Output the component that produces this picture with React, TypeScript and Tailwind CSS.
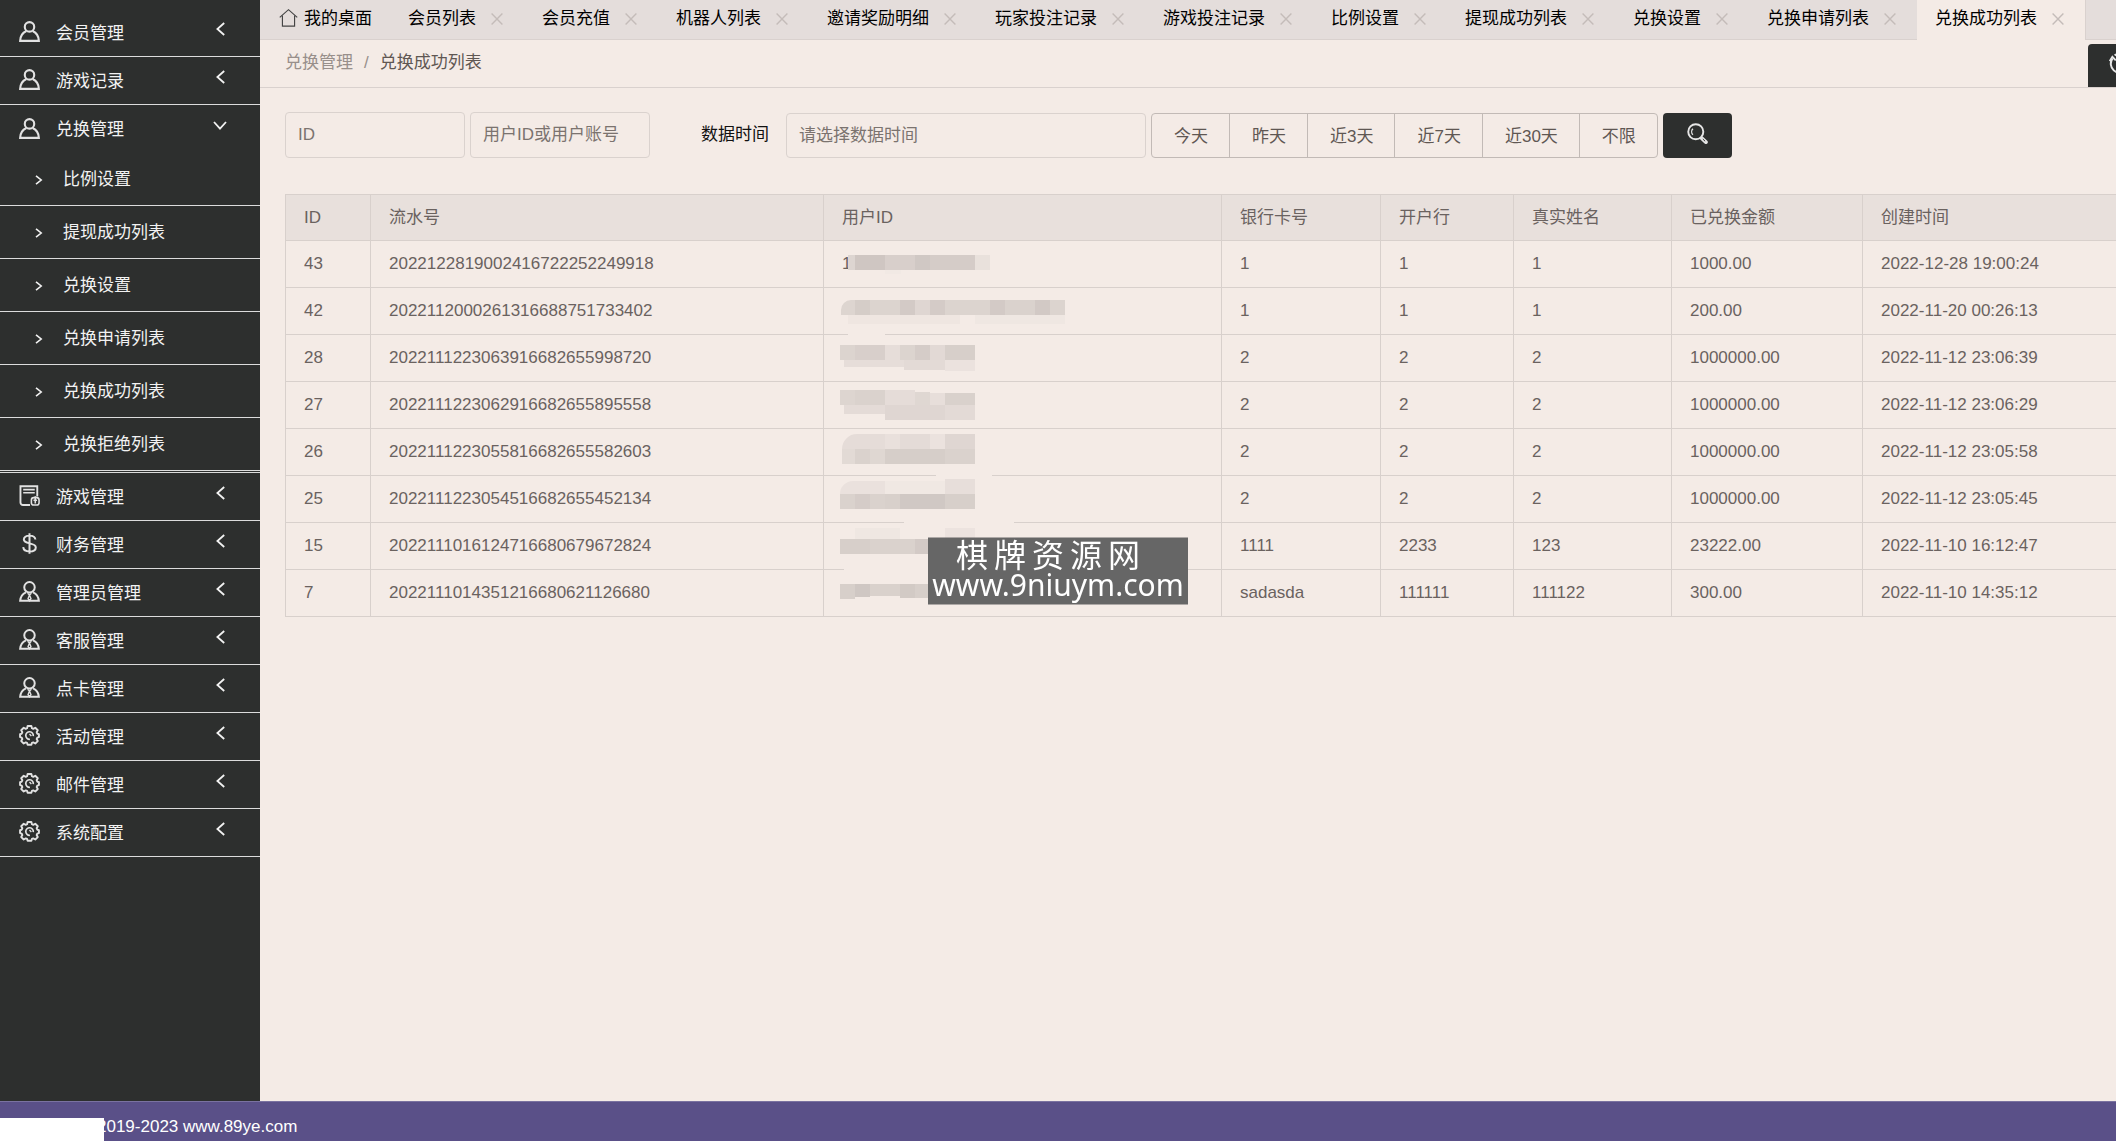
import type { ReactNode } from 'react';

type IconProps = { className?: string };

const tabs = [
  '会员列表',
  '会员充值',
  '机器人列表',
  '邀请奖励明细',
  '玩家投注记录',
  '游戏投注记录',
  '比例设置',
  '提现成功列表',
  '兑换设置',
  '兑换申请列表',
  '兑换成功列表',
];

const subMenu = ['比例设置', '提现成功列表', '兑换设置', '兑换申请列表', '兑换成功列表', '兑换拒绝列表'];

const ranges = ['今天', '昨天', '近3天', '近7天', '近30天', '不限'];

const columns = ['ID', '流水号', '用户ID', '银行卡号', '开户行', '真实姓名', '已兑换金额', '创建时间'];

const rows = [
  { id: '43', sn: '2022122819002416722252249918', card: '1', bank: '1', name: '1', money: '1000.00', time: '2022-12-28 19:00:24' },
  { id: '42', sn: '2022112000261316688751733402', card: '1', bank: '1', name: '1', money: '200.00', time: '2022-11-20 00:26:13' },
  { id: '28', sn: '2022111223063916682655998720', card: '2', bank: '2', name: '2', money: '1000000.00', time: '2022-11-12 23:06:39' },
  { id: '27', sn: '2022111223062916682655895558', card: '2', bank: '2', name: '2', money: '1000000.00', time: '2022-11-12 23:06:29' },
  { id: '26', sn: '2022111223055816682655582603', card: '2', bank: '2', name: '2', money: '1000000.00', time: '2022-11-12 23:05:58' },
  { id: '25', sn: '2022111223054516682655452134', card: '2', bank: '2', name: '2', money: '1000000.00', time: '2022-11-12 23:05:45' },
  { id: '15', sn: '2022111016124716680679672824', card: '1111', bank: '2233', name: '123', money: '23222.00', time: '2022-11-10 16:12:47' },
  { id: '7', sn: '2022111014351216680621126680', card: 'sadasda', bank: '111111', name: '111122', money: '300.00', time: '2022-11-10 14:35:12' },
];

// mosaic over the user id: x, y, width, height, fill
type Block = [number, number, number, number, string];

const mosaics: { round: number; left: number; top: number; blocks: Block[] }[] = [
  {
    round: 0,
    left: 22,
    top: 0,
    blocks: [
      [24, 14, 7, 15, '#ddd5d1'],
      [31, 14, 30, 15, '#cfc6c2'],
      [61, 14, 30, 15, '#d8cfcb'],
      [91, 14, 15, 15, '#d0c8c4'],
      [106, 14, 45, 15, '#d5ccc8'],
      [151, 14, 15, 15, '#e9e1dc'],
      [61, 29, 16, 4, '#f1e9e4'],
    ],
  },
  {
    round: 10,
    left: 17,
    top: 12,
    blocks: [
      [17, 12, 14, 15, '#ddd5d0'],
      [31, 12, 15, 15, '#d5cdc8'],
      [46, 12, 30, 15, '#dcd4cf'],
      [76, 12, 15, 15, '#d3cac6'],
      [91, 12, 15, 15, '#dfd6d2'],
      [106, 12, 15, 15, '#d4cbc7'],
      [121, 12, 45, 15, '#dcd4cf'],
      [166, 12, 15, 15, '#d3cac6'],
      [181, 12, 30, 15, '#dad2cd'],
      [211, 12, 15, 15, '#d2c9c5'],
      [226, 12, 15, 15, '#dcd4cf'],
      [24, 27, 112, 9, '#efe6e1'],
      [151, 27, 90, 9, '#efe7e2'],
      [24, 46, 37, 1, '#f4ebe6'],
    ],
  },
  {
    round: 0,
    left: 16,
    top: 0,
    blocks: [
      [16, 10, 15, 15, '#dcd4cf'],
      [31, 10, 30, 15, '#d8cfcb'],
      [61, 10, 15, 15, '#e6ddd9'],
      [76, 10, 15, 15, '#dcd4cf'],
      [91, 10, 15, 15, '#d5ccc8'],
      [106, 10, 15, 15, '#e2d9d5'],
      [121, 10, 30, 15, '#d7cfca'],
      [20, 25, 60, 7, '#e6ddd9'],
      [80, 25, 41, 10, '#e3dad6'],
      [121, 25, 30, 11, '#ebe2de'],
    ],
  },
  {
    round: 0,
    left: 16,
    top: 0,
    blocks: [
      [16, 8, 15, 15, '#ddd5d0'],
      [31, 8, 30, 15, '#dad2cd'],
      [61, 8, 30, 15, '#e5dcd8'],
      [91, 10, 15, 13, '#dfd7d2'],
      [106, 11, 15, 12, '#e7deda'],
      [121, 11, 30, 12, '#d9d1cc'],
      [20, 23, 41, 9, '#e4dbd7'],
      [61, 23, 60, 15, '#dfd6d2'],
      [121, 23, 30, 15, '#e3dad6'],
    ],
  },
  {
    round: 15,
    left: 18,
    top: 5,
    blocks: [
      [18, 5, 43, 15, '#e5dcd8'],
      [61, 5, 15, 15, '#e9e0dc'],
      [76, 5, 30, 15, '#e4dbd7'],
      [106, 5, 15, 15, '#ebe2de'],
      [121, 5, 30, 15, '#dfd6d2'],
      [18, 20, 13, 15, '#e2dad5'],
      [31, 20, 15, 15, '#dad2cd'],
      [46, 20, 15, 15, '#dfd7d2'],
      [61, 20, 60, 15, '#d6cec9'],
      [121, 20, 30, 15, '#dad2cd'],
      [112, 46, 56, 1, '#f4ebe6'],
    ],
  },
  {
    round: 13,
    left: 16,
    top: 5,
    blocks: [
      [16, 5, 45, 13, '#eae1dd'],
      [61, 5, 60, 13, '#f0e8e3'],
      [121, 3, 30, 15, '#e7deda'],
      [16, 18, 15, 15, '#dad2cd'],
      [31, 18, 15, 15, '#d5ccc8'],
      [46, 18, 15, 15, '#dad2cd'],
      [61, 18, 15, 15, '#d8d0cb'],
      [76, 18, 45, 15, '#d0c8c4'],
      [121, 18, 30, 15, '#d7cfca'],
      [80, 46, 110, 1, '#f4ebe6'],
    ],
  },
  {
    round: 0,
    left: 16,
    top: 0,
    blocks: [
      [31, 5, 45, 11, '#efe7e2'],
      [121, 5, 30, 11, '#ece3df'],
      [16, 16, 30, 15, '#d7cfca'],
      [46, 16, 45, 15, '#dad2cd'],
      [91, 16, 60, 15, '#d3cac6'],
      [20, 46, 100, 1, '#f4ebe6'],
    ],
  },
  {
    round: 0,
    left: 16,
    top: 0,
    blocks: [
      [16, 14, 15, 15, '#d7cfca'],
      [31, 14, 15, 13, '#cfc7c3'],
      [46, 14, 30, 12, '#d9d1cc'],
      [76, 14, 15, 14, '#d2cac5'],
      [91, 14, 60, 14, '#d7cfca'],
    ],
  },
];

function UserIcon({ className }: IconProps) {
  return (
    <svg viewBox="0 0 20 20" className={className} fill="none" stroke="currentColor" strokeWidth="2" aria-hidden="true">
      <circle cx="10" cy="5.6" r="4.5" />
      <path d="M7 9.600C3.400 11.200 1.300 14.400 1.100 18.900h17.800c-.2-4.500-2.300-7.700-5.900-9.300" />
    </svg>
  );
}

function StaffIcon({ className }: IconProps) {
  return (
    <svg viewBox="0 0 20 20" className={className} fill="none" stroke="currentColor" strokeWidth="1.900" aria-hidden="true">
      <circle cx="10" cy="6" r="5" />
      <path d="M6.600 10.800C3.300 12.200 1.400 15 1.100 18.900h17.800c-.3-3.900-2.200-6.700-5.500-8.100" />
      <path d="M8.200 11.600L10 13.400l1.800-1.800M10 13.400l-1.400 3.400 1.400 2 1.400-2z" strokeWidth="1.300" />
    </svg>
  );
}

function FormIcon({ className }: IconProps) {
  return (
    <svg viewBox="0 0 20 20" className={className} fill="none" stroke="currentColor" strokeWidth="1.800" aria-hidden="true">
      <path d="M10.500 19H3.800a2.400 2.400 0 0 1-2.400-2.400V1.200h16v9.800" />
      <path d="M4 4.400h11M4 7.400h11" strokeWidth="1.500" />
      <rect x="11.800" y="12" width="7.300" height="7" rx="2.200" strokeWidth="1.500" />
      <path d="M15.500 10.600v7M13.800 14.600h3.400" strokeWidth="1.500" />
    </svg>
  );
}

function DollarIcon({ className }: IconProps) {
  return (
    <svg viewBox="0 0 20 20" className={className} fill="none" stroke="currentColor" strokeWidth="1.900" aria-hidden="true">
      <path d="M10 .2v19.600M15.600 6.200c-.2-2.300-2.200-3.700-5.600-3.700S4.600 4 4.600 6.200c0 4.900 11.400 2.500 11.400 7.500 0 2.500-2.300 3.900-6 3.900s-5.700-1.600-6-4.100" />
    </svg>
  );
}

function GearIcon({ className }: IconProps) {
  return (
    <svg viewBox="0 0 20 20" className={className} fill="none" stroke="currentColor" strokeWidth="1.800" strokeLinejoin="round" aria-hidden="true">
      <path d="M8.200 1h3.600l.5 2.100 1.300.6 1.900-1.100 2.400 2.400-1.100 1.900.6 1.400 1.600.4v2.800l-1.600.5-.6 1.400 1.100 1.900-2.400 2.300-1.900-1-1.300.5-.5 1.700H8.200l-.5-1.700-1.300-.5-1.900 1-2.400-2.300 1.100-1.900-.6-1.400L1 11.500V8.700l1.600-.4.600-1.400L2.100 5l2.400-2.400 1.900 1.100 1.300-.6z" />
      <path d="M10.400 13.600A3.600 3.600 0 1 1 13.600 10.600" strokeWidth="1.600" />
      <path d="M10 8.600l1.800 1.800" strokeWidth="1.300" />
    </svg>
  );
}

function HomeIcon({ className }: IconProps) {
  return (
    <svg viewBox="0 0 20 20" className={className} fill="none" stroke="currentColor" strokeWidth="1.200" aria-hidden="true">
      <path d="M.8 9.400L10 1.200l9.200 8.200M3.600 7.600v10.900h12.800V7.600" />
    </svg>
  );
}

function SearchIcon({ className }: IconProps) {
  return (
    <svg viewBox="0 0 22 22" className={className} fill="none" stroke="currentColor" aria-hidden="true">
      <circle cx="9.200" cy="9.200" r="7.900" strokeWidth="2" />
      <path d="M6.200 12.400a4.600 4.600 0 0 1 0-6.400" strokeWidth="1.400" />
      <path d="M15.600 16l4.200 4" strokeWidth="4" strokeLinecap="round" />
      <path d="M16.600 16.800l2.400 2.300" strokeWidth="1" stroke="#2d2f2e" />
    </svg>
  );
}

function RefreshIcon({ className }: IconProps) {
  return (
    <svg viewBox="0 0 22 22" className={className} fill="none" stroke="currentColor" strokeWidth="2" aria-hidden="true">
      <path d="M3.400 6.600a9 9 0 0 0 13.200 12M18.600 15.400a9 9 0 0 0-13-12" />
      <path d="M.8 9.200l2.600-4.400 3.400 3.600M21.200 12.800l-2.600 4.400-3.400-3.600" />
    </svg>
  );
}

function ChevronLeft({ className }: IconProps) {
  return (
    <svg viewBox="0 0 9 14" className={className} fill="none" stroke="currentColor" strokeWidth="1.800" aria-hidden="true">
      <path d="M8.200 1L1.400 7l6.800 6" />
    </svg>
  );
}

function ChevronDown({ className }: IconProps) {
  return (
    <svg viewBox="0 0 14 9" className={className} fill="none" stroke="currentColor" strokeWidth="1.800" aria-hidden="true">
      <path d="M1 1l6 6.600L13 1" />
    </svg>
  );
}

function ChevronRight({ className }: IconProps) {
  return (
    <svg viewBox="0 0 8 10" className={className} fill="none" stroke="currentColor" strokeWidth="1.600" aria-hidden="true">
      <path d="M1 .8L6.200 5 1 9.200" />
    </svg>
  );
}

function CloseIcon({ className }: IconProps) {
  return (
    <svg viewBox="0 0 12 12" className={className} fill="none" stroke="currentColor" strokeWidth="1.400" aria-hidden="true">
      <path d="M.6.600l10.800 10.800M11.400.600L.6 11.400" />
    </svg>
  );
}

function MenuItem({ icon, label, open }: { icon: ReactNode; label: string; open?: boolean }) {
  return (
    <button
      type="button"
      aria-expanded={!!open}
      className={`flex h-12 w-full items-center pl-[19px] pr-[33px] pt-[2px] text-left ${open ? '' : 'border-b border-[#dcdcdc]'}`}
    >
      {icon}
      <span className="ml-4 flex-1">{label}</span>
      <span className="mb-[10px] flex w-[14px] justify-center">
        {open ? <ChevronDown className="h-[9px] w-[14px]" /> : <ChevronLeft className="h-[14px] w-[9px]" />}
      </span>
    </button>
  );
}

function Sidebar() {
  const icon = 'mb-1 h-[21px] w-[21px] shrink-0 text-[#e2e2e2]';
  return (
    <nav className="w-[260px] shrink-0 bg-[#2d2f2e] pt-[9px] text-[#f2f2f2]">
      <MenuItem icon={<UserIcon className={icon} />} label="会员管理" />
      <MenuItem icon={<UserIcon className={icon} />} label="游戏记录" />
      <MenuItem icon={<UserIcon className={icon} />} label="兑换管理" open />
      <ul className="border-b border-[#dcdcdc] pb-px">
        {subMenu.map((label) => (
          <li key={label}>
            <a href="#" className="flex h-[53px] items-center border-b border-[#dcdcdc] pl-[35px] pt-[2px]">
              <ChevronRight className="h-[10px] w-2" />
              <span className="ml-5">{label}</span>
            </a>
          </li>
        ))}
      </ul>
      <MenuItem icon={<FormIcon className={icon} />} label="游戏管理" />
      <MenuItem icon={<DollarIcon className={icon} />} label="财务管理" />
      <MenuItem icon={<StaffIcon className={icon} />} label="管理员管理" />
      <MenuItem icon={<StaffIcon className={icon} />} label="客服管理" />
      <MenuItem icon={<StaffIcon className={icon} />} label="点卡管理" />
      <MenuItem icon={<GearIcon className={icon} />} label="活动管理" />
      <MenuItem icon={<GearIcon className={icon} />} label="邮件管理" />
      <MenuItem icon={<GearIcon className={icon} />} label="系统配置" />
    </nav>
  );
}

function TabBar() {
  return (
    <div className="flex h-10 bg-[#e4dddb] text-black">
      <a href="#" className="flex shrink-0 items-center border-b border-[#d9d1ce] pb-[2px] pl-[19px] pr-[18px]">
        <HomeIcon className="mb-[2px] mr-[6px] h-5 w-[19px] text-[#444]" />
        我的桌面
      </a>
      {tabs.map((tab, i) => (
        <div
          key={tab}
          className={`flex shrink-0 items-center border-b pb-[2px] pl-[18px] pr-[21px] ${
            i === tabs.length - 1 ? 'border-[#f4ebe6] bg-[#f4ebe6]' : 'border-[#d9d1ce]'
          }`}
        >
          <a href="#">{tab}</a>
          <button type="button" aria-label={`关闭${tab}`} className="ml-[15px] text-[#c4bcb9]">
            <CloseIcon className="h-3 w-3" />
          </button>
        </div>
      ))}
      <div className="flex-1 border-b border-l border-[#d9d1ce]" />
    </div>
  );
}

function Filters() {
  const field = 'rounded-sm border border-[#dad2ce] bg-transparent px-3 placeholder:text-[#7b736f] outline-none';
  return (
    <form className="flex items-end pl-[25px] pt-6">
      <input aria-label="ID" placeholder="ID" className={`${field} mr-[5px] h-[46px] w-[180px]`} />
      <input aria-label="用户ID或用户账号" placeholder="用户ID或用户账号" className={`${field} h-[46px] w-[180px]`} />
      <label htmlFor="range" className="ml-[51px] mr-[17px] flex h-[46px] items-center text-[#111]">
        数据时间
      </label>
      <input id="range" placeholder="请选择数据时间" className={`${field} mr-[5px] h-[45px] w-[360px]`} />
      <div className="mr-[5px] flex h-[45px] divide-x divide-[#c2bab6] rounded-sm border border-[#c2bab6]">
        {ranges.map((r) => (
          <button key={r} type="button" className="pl-[22px] pr-[21px] pt-[2px] text-[#5f5753]">
            {r}
          </button>
        ))}
      </div>
      <button type="submit" aria-label="搜索" className="flex h-[45px] w-[69px] items-center justify-center rounded-sm bg-[#2d2f2e] pb-1 text-[#e6e6e6]">
        <SearchIcon className="h-[21px] w-[21px]" />
      </button>
    </form>
  );
}

function UserCell({ row }: { row: number }) {
  const { round, left, top, blocks } = mosaics[row];
  return (
    <div className="relative flex h-[46px] items-center px-[18px]">
      {row === 0 && '1'}
      <svg className="absolute left-0 top-0 h-[47px] w-[300px]" viewBox="0 0 300 47" aria-hidden="true">
        {blocks.map(([x, y, w, h, fill]) => (
          <rect key={`${x}-${y}`} x={x} y={y} width={w} height={h} fill={fill} />
        ))}
        {round > 0 && (
          <path d={`M${left - 1} ${top - 1}h${round + 1}v1a${round} ${round} 0 0 0-${round} ${round}h-1z`} fill="#f4ebe6" />
        )}
      </svg>
    </div>
  );
}

function DataTable() {
  const cell = 'border border-[#d8d0cc] px-[18px]';
  return (
    <div className="ml-[25px] mt-9 overflow-hidden">
      <table className="w-full table-fixed border-collapse text-[#6a625f]">
        <colgroup>
          <col className="w-[85px]" />
          <col className="w-[453px]" />
          <col className="w-[398px]" />
          <col className="w-[159px]" />
          <col className="w-[133px]" />
          <col className="w-[158px]" />
          <col className="w-[191px]" />
          <col />
        </colgroup>
        <thead>
          <tr className="h-[46px] bg-[#e8e0dc] text-left">
            {columns.map((c) => (
              <th key={c} className={`${cell} font-normal last:border-r-0`}>
                {c}
              </th>
            ))}
          </tr>
        </thead>
        <tbody>
          {rows.map((row, i) => (
            <tr key={row.id} className="h-[47px]">
              <td className={cell}>{row.id}</td>
              <td className={cell}>{row.sn}</td>
              <td className="border border-[#d8d0cc] p-0">
                <UserCell row={i} />
              </td>
              <td className={cell}>{row.card}</td>
              <td className={cell}>{row.bank}</td>
              <td className={cell}>{row.name}</td>
              <td className={cell}>{row.money}</td>
              <td className={`${cell} border-r-0`}>{row.time}</td>
            </tr>
          ))}
        </tbody>
      </table>
    </div>
  );
}

export default function App() {
  return (
    <div className="flex min-h-screen flex-col overflow-hidden bg-[#f4ebe6] font-['Liberation_Sans','Noto_Sans_CJK_SC',sans-serif] text-[17px] leading-6">
      <div className="flex flex-1">
        <Sidebar />
        <main className="min-w-0 flex-1 overflow-hidden">
          <TabBar />
          <div className="flex h-12 items-end justify-between border-b border-[#d9d1ce] pl-[25px]">
            <div className="flex h-full items-center pb-px">
              <a href="#" className="text-[#988f8b]">兑换管理</a>
              <span className="mx-[11px] text-[#988f8b]">/</span>
              <span className="text-[#5f5753]">兑换成功列表</span>
            </div>
            <button type="button" aria-label="刷新" className="-mr-[41px] flex h-[43px] w-[69px] items-center rounded-tl-sm bg-[#2d2f2e] pb-[6px] pl-[21px] text-[#e6e6e6]">
              <RefreshIcon className="h-[22px] w-[22px]" />
            </button>
          </div>
          <Filters />
          <DataTable />
        </main>
      </div>

      <footer className="flex h-10 items-end border-t border-[#7a72a0] bg-[#5a5088] text-white">
        <div className="z-10 h-[23px] w-[104px] bg-white" />
        <p className="-ml-[7px] pb-[2px]">2019-2023 www.89ye.com</p>
      </footer>

      {/* site stamp */}
      <div className="fixed left-1/2 top-1/2 flex h-[67px] w-[260px] -translate-x-1/2 -translate-y-1/2 flex-col bg-[#666] font-['Noto_Sans','Noto_Sans_CJK_SC',sans-serif] text-white">
        <div className="flex justify-center gap-[6px] pr-5 text-[32px] leading-[34px]">
          {['棋', '牌', '资', '源', '网'].map((c) => (
            <span key={c}>{c}</span>
          ))}
        </div>
        <div className="text-center text-[30px] leading-[26px]">www.9niuym.com</div>
      </div>
    </div>
  );
}
